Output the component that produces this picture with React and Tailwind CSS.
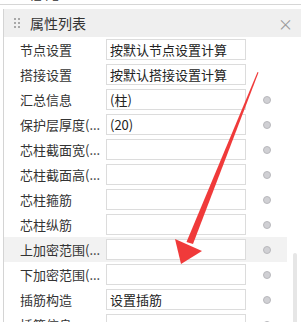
import React from "react";

const rows = [
  { label: "节点设置", value: "按默认节点设置计算", radio: false },
  { label: "搭接设置", value: "按默认搭接设置计算", radio: false },
  { label: "汇总信息", value: "(柱)", radio: true },
  { label: "保护层厚度(mm)", value: "(20)", radio: true },
  { label: "芯柱截面宽(mm)", value: "", radio: true },
  { label: "芯柱截面高(mm)", value: "", radio: true },
  { label: "芯柱箍筋", value: "", radio: true },
  { label: "芯柱纵筋", value: "", radio: true },
  { label: "上加密范围(mm)", value: "", radio: true, active: true },
  { label: "下加密范围(mm)", value: "", radio: true },
  { label: "插筋构造", value: "设置插筋", radio: true },
  { label: "插筋信息", value: "", radio: true },
];

const Row = ({ row }) => (
  <div
    className={
      "flex items-center h-[25px] shrink-0 " +
      (row.active ? "bg-[#f2f2f2] mr-[14px]" : "mr-[14px]")
    }
  >
    <div className="w-[102px] pl-[16px] pr-[4px] truncate text-[13px] text-[#333]">
      {row.label.length > 5 ? row.label.slice(0, 5) + "(..." : row.label}
    </div>
    <div className="w-[140px] h-[21px] border border-[#dcdcdc] bg-white flex items-center px-[3px] text-[13px] text-[#222]">
      {row.value}
    </div>
    <div className="flex-1 flex justify-center pl-[1px]">
      {row.radio && (
        <div className="w-[8px] h-[8px] rounded-full bg-[#d0d0d4] border border-[#b8b8bc]" />
      )}
    </div>
  </div>
);

const App = () => {
  return (
    <div
      className="relative w-[301px] h-[322px] overflow-hidden bg-white"
      style={{ fontFamily: '"Noto Sans CJK SC", "Noto Sans", sans-serif' }}
    >
      <div className="h-[4px] relative overflow-hidden">
        <div className="absolute left-[30px] top-[-11px] text-[13px] text-[#555] leading-[14px]">
          IZ4 1
        </div>
      </div>
      <div className="h-[5px] border-t border-[#d6d6d6]" />
      <div className="ml-[3px] border-l border-[#d4d4d4] flex flex-col">
        <div className="h-[28px] bg-[#efefef] flex items-center pl-[10px] pr-[8px]">
          <div className="grid grid-cols-2 gap-x-[2px] gap-y-[2px] mr-[10px]">
            {[0, 1, 2, 3, 4, 5].map((i) => (
              <div key={i} className="w-[2px] h-[2px] bg-[#a8a8a8]" />
            ))}
          </div>
          <div className="text-[14px] text-[#333] flex-1">属性列表</div>
          <div className="text-[15px] text-[#9a9a9a] leading-none">×</div>
        </div>
        <div className="flex">
          <div className="flex-1 flex flex-col">
            {rows.map((row, i) => (
              <Row key={i} row={row} />
            ))}
          </div>
        </div>
      </div>
      <div className="absolute left-[293px] top-[253px] w-[4px] h-[80px] rounded-full bg-[#e6e6e6]" />
      <svg
        className="absolute left-0 top-0"
        width="301"
        height="322"
        viewBox="0 0 301 322"
      >
        <polygon
          points="257.5,72 258.5,72.5 193,244 186.5,242"
          fill="#f03a3a"
        />
        <polygon points="181,264 175,239 202,251" fill="#f03a3a" />
      </svg>
    </div>
  );
};

export default App;
